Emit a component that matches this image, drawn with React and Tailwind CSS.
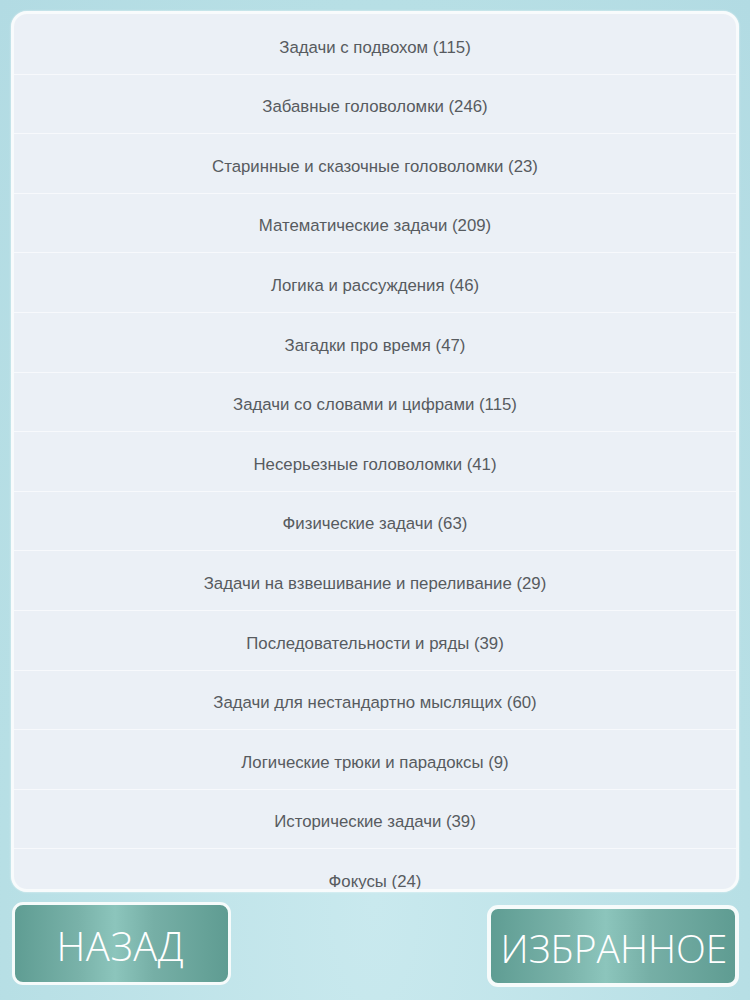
import React from "react";

const items = [
  "Задачи с подвохом (115)",
  "Забавные головоломки (246)",
  "Старинные и сказочные головоломки (23)",
  "Математические задачи (209)",
  "Логика и рассуждения (46)",
  "Загадки про время (47)",
  "Задачи со словами и цифрами (115)",
  "Несерьезные головоломки (41)",
  "Физические задачи (63)",
  "Задачи на взвешивание и переливание (29)",
  "Последовательности и ряды (39)",
  "Задачи для нестандартно мыслящих (60)",
  "Логические трюки и парадоксы (9)",
  "Исторические задачи (39)",
  "Фокусы (24)",
];

export default function App() {
  return (
    <div className="w-[750px] h-[1000px] overflow-hidden bg-[radial-gradient(ellipse_at_50%_90%,#c9e9ee_0%,#b7dfe5_70%,#b2dbe3_100%)] flex flex-col px-[11px] pt-[11px]" style={{ fontFamily: '"Liberation Sans", Arial, sans-serif' }}>
      <div className="h-[881px] rounded-[16px] border-[3px] border-[#f8fbfc] bg-[#ebf0f6] overflow-hidden shadow-[0_0_2px_rgba(255,255,255,0.8)]">
        <div className="flex flex-col pt-[1px]">
          {items.map((t, i) => (
            <div key={i} className="h-[59.6px] shrink-0 border-b border-[#f7f9fc] flex items-center justify-center pt-[6px] text-[16.8px] text-[#575b5f]">
              {t}
            </div>
          ))}
        </div>
      </div>
      <div className="flex justify-between items-start mt-[10px] pl-[1px]">
        <button className="w-[219px] h-[83px] rounded-[11px] border-[3px] border-[#f6fbfb] bg-[linear-gradient(90deg,#5f9d93_0%,#79b2a9_30%,#8cc5bc_47%,#76afa6_65%,#5f9c92_100%)] flex items-center justify-center overflow-hidden">
          <span className="text-white text-[40px] font-light tracking-[0.5px] leading-none pt-[5px] pr-[2px]" style={{ fontFamily: '"Open Sans", "DejaVu Sans", sans-serif' }}>НАЗАД</span>
        </button>
        <button className="mt-[3px] w-[252px] h-[82px] rounded-[11px] border-[4px] border-[#f6fbfb] bg-[linear-gradient(90deg,#5f9d93_0%,#79b2a9_30%,#8cc5bc_47%,#76afa6_65%,#5f9c92_100%)] flex items-center justify-center overflow-hidden">
          <span className="text-white text-[39px] font-light leading-none pt-[2px] pl-[2px] whitespace-nowrap" style={{ fontFamily: '"Open Sans", "DejaVu Sans", sans-serif' }}>ИЗБРАННОЕ</span>
        </button>
      </div>
    </div>
  );
}
